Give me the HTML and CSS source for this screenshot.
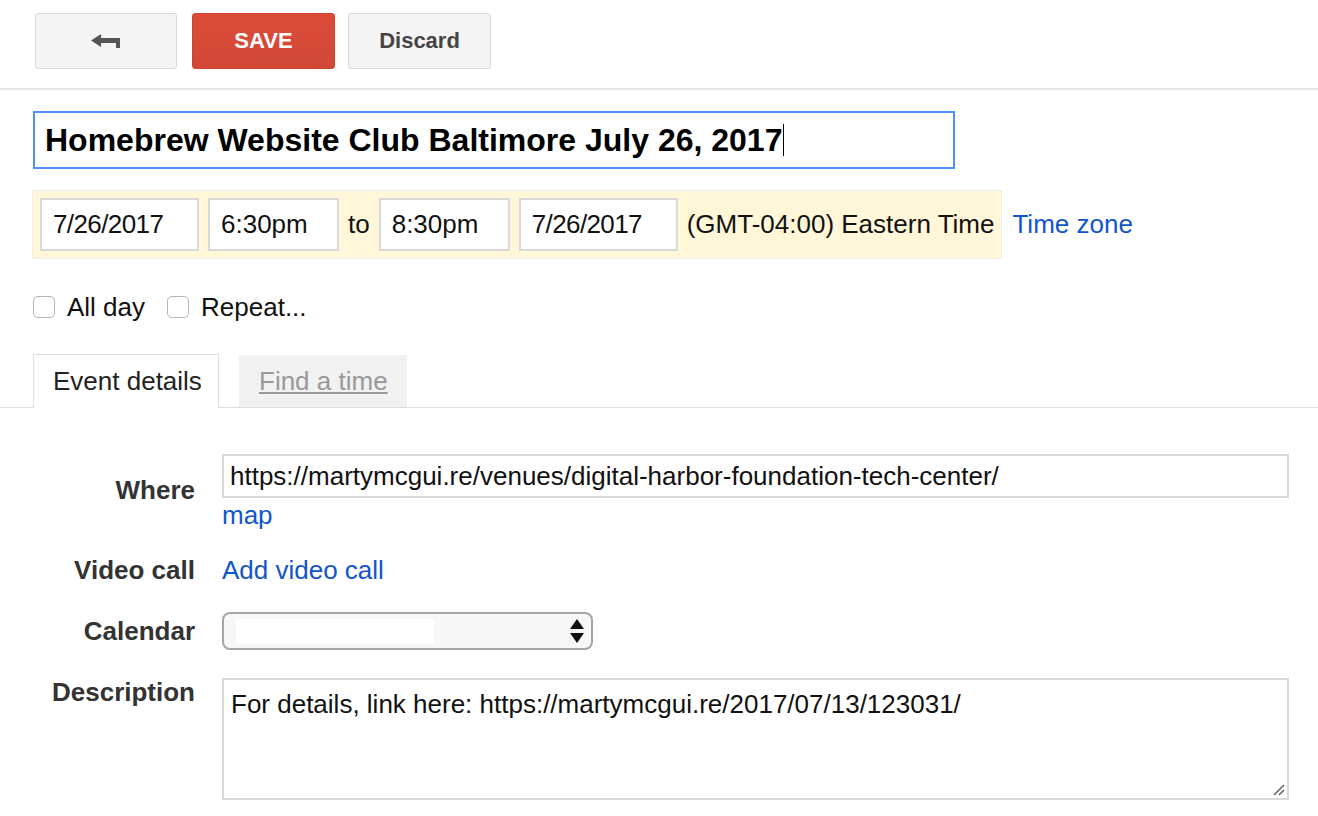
FILE: index.html
```html
<!DOCTYPE html>
<html>
<head>
<meta charset="utf-8">
<link rel="stylesheet" href="styles.css">
</head>
<body>
<div class="toolbar">
  <div class="btn btn-back">
    <svg width="30" height="14" viewBox="0 0 30 14"><path d="M0 6.5 L10 0 L10 4 L29 4 L29 14 L25 14 L25 9 L10 9 L10 13 Z" fill="#555"/></svg>
  </div>
  <div class="btn btn-save">SAVE</div>
  <div class="btn btn-discard">Discard</div>
</div>

<div class="title-row">
  <div class="title-box">Homebrew Website Club Baltimore July 26, 2017<span class="caret"></span></div>
</div>

<div class="when-row">
  <div class="when">
    <div class="field date">7/26/2017</div>
    <div class="field time">6:30pm</div>
    <span class="to">to</span>
    <div class="field time">8:30pm</div>
    <div class="field date">7/26/2017</div>
    <span class="tz">(GMT-04:00) Eastern Time</span>
  </div>
  <a class="link tz-link">Time zone</a>
</div>

<div class="checks">
  <span class="box"></span><span class="check-label">All day</span>
  <span class="box box2"></span><span class="check-label">Repeat...</span>
</div>

<div class="tabs">
  <div class="tab active">Event details</div>
  <div class="tab inactive"><span>Find a time</span></div>
</div>

<div class="form">
  <div class="row row-where">
    <div class="label">Where</div>
    <div class="content">
      <div class="text-input">https://martymcgui.re/venues/digital-harbor-foundation-tech-center/</div>
      <a class="link map">map</a>
    </div>
  </div>
  <div class="row row-video">
    <div class="label">Video call</div>
    <div class="content"><a class="link">Add video call</a></div>
  </div>
  <div class="row row-cal">
    <div class="label">Calendar</div>
    <div class="content">
      <div class="select">
        <span class="select-value"></span>
        <svg class="arrows" width="14" height="24" viewBox="0 0 14 24"><path d="M7 0 L14 10 L0 10 Z M0 14 L14 14 L7 24 Z" fill="#111"/></svg>
      </div>
    </div>
  </div>
  <div class="row row-desc">
    <div class="label">Description</div>
    <div class="content">
      <div class="textarea">For details, link here: https://martymcgui.re/2017/07/13/123031/
        <svg class="grip" width="14" height="14" viewBox="0 0 14 14"><path d="M13 3 L3 13 M13 8 L8 13" stroke="#666" stroke-width="1.6"/></svg>
      </div>
    </div>
  </div>
</div>
</body>
</html>
```
FILE: styles.css
```css
* { box-sizing: border-box; }
body {
  margin: 0;
  font-family: "Liberation Sans", Arial, sans-serif;
  font-size: 26px;
  color: #222;
  background: #fff;
}
.link { color: #1155cc; cursor: pointer; }

.toolbar {
  height: 90px;
  border-bottom: 2px solid #e5e5e5;
  padding: 13px 0 0 35px;
  display: flex;
  align-items: flex-start;
}
.btn {
  height: 56px;
  width: 143px;
  border-radius: 3px;
  display: flex;
  align-items: center;
  justify-content: center;
  font-weight: bold;
  font-size: 22px;
}
.btn-back {
  width: 142px;
  background: #f4f4f4;
  border: 1px solid #d8d8d8;
}
.btn-save {
  margin-left: 15px;
  background: linear-gradient(#dd4b39, #d14836);
  border: 1px solid #cf4533;
  color: #fff;
}
.btn-discard {
  margin-left: 13px;
  background: #f4f4f4;
  border: 1px solid #d8d8d8;
  color: #444;
}

.title-row { padding: 21px 0 0 33px; }
.title-box {
  width: 922px;
  height: 58px;
  border: 2px solid #4d90fe;
  padding-left: 10px;
  font-size: 32px;
  font-weight: bold;
  line-height: 54px;
  color: #000;
  white-space: nowrap;
}
.caret {
  display: inline-block;
  width: 1px;
  height: 32px;
  background: #000;
  vertical-align: -5px;
  margin-left: 1px;
}

.when-row {
  margin-top: 21px;
  padding-left: 32px;
  display: flex;
  align-items: center;
}
.when {
  display: flex;
  align-items: center;
  background: #fff7d8;
  border: 1px solid #ececec;
  padding: 7px;
  gap: 9px;
}
.field {
  height: 53px;
  border: 2px solid #d9d9d9;
  background: #fff;
  padding-left: 11px;
  line-height: 49px;
  color: #111;
  white-space: nowrap;
}
.field.date { width: 159px; letter-spacing: -0.6px; }
.field.time { width: 131px; }
.to, .tz { color: #111; white-space: nowrap; }
.tz-link { margin-left: 10px; }

.checks {
  margin-top: 33px;
  height: 30px;
  padding-left: 33px;
  display: flex;
  align-items: center;
}
.box {
  width: 22px;
  height: 22px;
  border: 1.5px solid #b5b5b5;
  border-radius: 5px;
  background: #fff;
}
.box2 { margin-left: 22px; }
.check-label { margin-left: 12px; color: #111; }

.tabs {
  margin-top: 32px;
  padding-left: 33px;
  border-bottom: 1px solid #dedede;
  display: flex;
  align-items: flex-end;
  height: 54px;
}
.tab {
  height: 54px;
  line-height: 52px;
}
.tab.active {
  width: 186px;
  border: 1px solid #dedede;
  border-bottom: none;
  background: #fff;
  padding-left: 19px;
  margin-bottom: -1px;
  color: #222;
}
.tab.inactive {
  width: 168px;
  height: 52px;
  line-height: 52px;
  margin-left: 20px;
  background: #f1f1f1;
  padding-left: 20px;
  color: #999;
}
.tab.inactive span { text-decoration: underline; }

.form { padding-top: 46px; }
.row { display: flex; align-items: flex-start; }
.label {
  width: 195px;
  text-align: right;
  font-weight: bold;
  color: #333;
  line-height: 30px;
}
.content { margin-left: 27px; }

.row-where .label { padding-top: 21px; }
.text-input {
  width: 1067px;
  height: 44px;
  border: 2px solid #d9d9d9;
  padding-left: 6px;
  line-height: 40px;
  color: #111;
  white-space: nowrap;
}
.map { display: block; line-height: 30px; margin-top: 2px; }

.row-video { margin-top: 25px; }
.row-video .content { line-height: 30px; }

.row-cal { margin-top: 27px; }
.row-cal .label { line-height: 38px; }
.select {
  width: 371px;
  height: 38px;
  border: 2px solid #a5a5a5;
  border-radius: 8px;
  background: #f7f7f7;
  display: flex;
  align-items: center;
  padding: 0 7px 0 12px;
}
.select-value {
  width: 198px;
  height: 25px;
  background: #fff;
}
.arrows { margin-left: auto; }

.row-desc { margin-top: 28px; }
.row-desc .label { line-height: 28px; }
.textarea {
  position: relative;
  width: 1067px;
  height: 122px;
  border: 2px solid #d9d9d9;
  padding: 9px 0 0 7px;
  line-height: 30px;
  color: #111;
  white-space: nowrap;
}
.grip {
  position: absolute;
  right: 2px;
  bottom: 2px;
}
```
